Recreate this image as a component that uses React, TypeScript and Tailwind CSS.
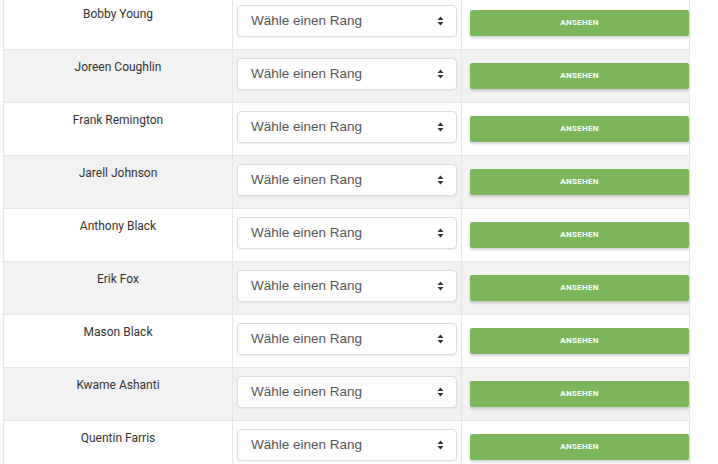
import React from 'react';

const players = [
    'Bobby Young',
    'Joreen Coughlin',
    'Frank Remington',
    'Jarell Johnson',
    'Anthony Black',
    'Erik Fox',
    'Mason Black',
    'Kwame Ashanti',
    'Quentin Farris',
];

function SortArrows() {
    return (
        <svg width="7" height="10" viewBox="0 0 7 10" className="shrink-0">
            <path d="M3.5 0.5 L6.5 4 H0.5 Z" fill="#333" />
            <path d="M3.5 9.5 L6.5 6 H0.5 Z" fill="#333" />
        </svg>
    );
}

export default function App() {
    return (
        <div className="w-[718px] h-[464px] overflow-hidden bg-white">
            <div className="-mt-[4px] ml-[3px] w-[687px] border-l border-r border-[#e6e6e6]">
                {players.map((name, i) => (
                    <div
                        key={name}
                        className={`flex h-[53px] border-t border-[#e6e6e6] ${i % 2 === 1 ? 'bg-[#f2f2f2]' : 'bg-white'}`}
                    >
                        <div className="w-[228px] pt-[9px] text-center text-[12px] leading-[17px] text-[#333] font-['Roboto',sans-serif]">
                            {name}
                        </div>
                        <div className="w-[229px] border-l border-[#e6e6e6] px-[4px] pt-[8px]">
                            <div className="flex h-[32px] items-center justify-between rounded-[4px] border border-[#dcdcdc] bg-white pl-[13px] pr-[12px] shadow-[0_1px_2px_rgba(0,0,0,0.06)]">
                                <span className="text-[13.5px] text-[#555] font-['Liberation_Sans',Arial,sans-serif]">Wähle einen Rang</span>
                                <SortArrows />
                            </div>
                        </div>
                        <div className="w-[228px] border-l border-[#e6e6e6] pl-[8px] pt-[13px]">
                            <button className="flex h-[26px] w-[219px] items-center justify-center rounded-[2px] bg-[#7cb65a] text-[8px] font-bold tracking-[0.3px] text-white shadow-[0_2px_3px_rgba(0,0,0,0.18)] font-['Roboto',sans-serif]">
                                ANSEHEN
                            </button>
                        </div>
                    </div>
                ))}
            </div>
        </div>
    );
}
